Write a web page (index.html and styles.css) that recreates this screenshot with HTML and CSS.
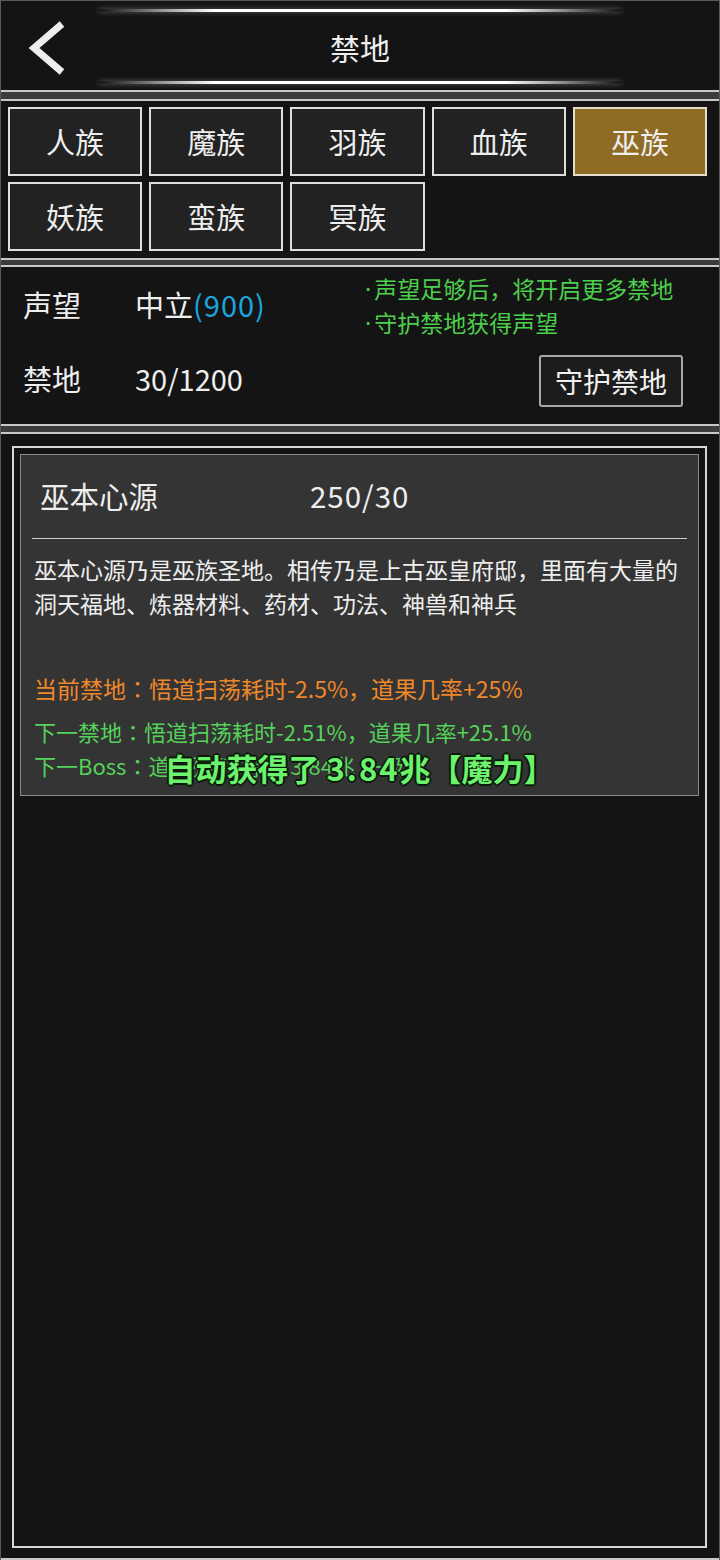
FILE: index.html
```html
<!doctype html>
<html>

<head>
	<meta charset="utf-8">
	<title>禁地</title>
	<link rel="stylesheet" href="styles.css">
</head>

<body>
	<div class="app">
		<!--ヘッダー-->
		<div class="header">
			<div class="deco"></div>
			<div class="title-row">
				<svg class="back" width="44" height="56" viewBox="0 0 44 56">
					<polyline points="36,3 8,27 36,51" fill="none" stroke="#ededed" stroke-width="7" stroke-linejoin="miter" />
				</svg>
				<h1>禁地</h1>
			</div>
			<div class="deco"></div>
		</div>

		<!--種族タブ-->
		<div class="panel tabs">
			<div class="tab">人族</div>
			<div class="tab">魔族</div>
			<div class="tab">羽族</div>
			<div class="tab">血族</div>
			<div class="tab active">巫族</div>
			<div class="tab">妖族</div>
			<div class="tab">蛮族</div>
			<div class="tab">冥族</div>
		</div>

		<!--声望-->
		<div class="panel stats">
			<div class="stat-left">
				<div class="stat-row"><span class="label">声望</span><span>中立<span class="blue">(900)</span></span></div>
				<div class="stat-row"><span class="label">禁地</span><span>30/1200</span></div>
			</div>
			<div class="stat-right">
				<p class="note"><span class="dot">·</span>声望足够后，将开启更多禁地</p>
				<p class="note"><span class="dot">·</span>守护禁地获得声望</p>
				<button class="guard-btn">守护禁地</button>
			</div>
		</div>

		<!--禁地リスト-->
		<div class="panel main">
			<div class="frame">
				<div class="card">
					<div class="card-head">
						<span class="card-name">巫本心源</span>
						<span class="num">250/30</span>
					</div>
					<p class="desc">巫本心源乃是巫族圣地。相传乃是上古巫皇府邸，里面有大量的洞天福地、炼器材料、药材、功法、神兽和神兵</p>
					<p class="cur">当前禁地：悟道扫荡耗时-2.5%，道果几率+25%</p>
					<p class="next">下一禁地：悟道扫荡耗时-2.51%，道果几率+25.1%</p>
					<p class="next boss">下一Boss：道祖残魂 等级 3.84兆 一级</p>
					<div class="toast">自动获得了 <span class="toast-num">3.84</span>兆【魔力】</div>
				</div>
			</div>
		</div>
	</div>
</body>

</html>
```

FILE: styles.css
```css
body {
	margin: 0;
	background-color: #151515;
	font-family: "Noto Sans CJK SC", "Noto Sans", sans-serif;
	color: #eeeeee;
}

.app {
	width: 720px;
	height: 1560px;
	box-sizing: border-box;
	border: 1px solid #5a5a5a;
	border-bottom: none;
	background-color: #3b3b3b;
	display: flex;
	flex-direction: column;
}

.header {
	height: 91px;
	background-color: #141414;
	border-bottom: 2px solid #c8c8c8;
	display: flex;
	flex-direction: column;
	justify-content: space-between;
	padding: 8px 0 6px;
	box-sizing: border-box;
	margin-bottom: 7px;
}

.deco {
	height: 3px;
	margin: 0 98px;
	background: linear-gradient(to right, rgba(255, 255, 255, 0), #ffffff 22%, #ffffff 78%, rgba(255, 255, 255, 0));
	box-shadow: 0 0 5px rgba(255, 255, 255, 0.35);
}

.title-row {
	position: relative;
	text-align: center;
}

.title-row h1 {
	margin: 0;
	font-size: 30px;
	font-weight: normal;
	line-height: 42px;
}

.back {
	position: absolute;
	left: 25px;
	top: -5px;
}

.panel {
	background-color: #141414;
	border-top: 2px solid #c8c8c8;
	border-bottom: 2px solid #c8c8c8;
}

.tabs {
	display: grid;
	grid-template-columns: repeat(5, 1fr);
	column-gap: 7px;
	row-gap: 6px;
	padding: 6px 12px 7px 7px;
	margin-bottom: 5px;
}

.tab {
	height: 69px;
	box-sizing: border-box;
	border: 2px solid #dedede;
	background-color: #222222;
	font-size: 29px;
	line-height: 64px;
	text-align: center;
}

.tab.active {
	background-color: #8f6b24;
	border-color: #e6dccb;
}

.stats {
	height: 161px;
	box-sizing: border-box;
	display: flex;
	margin-bottom: 6px;
}

.stat-left {
	padding: 17px 0 0 22px;
	display: flex;
	flex-direction: column;
	gap: 34px;
}

.stat-row {
	font-size: 29px;
	line-height: 40px;
}

.label {
	display: inline-block;
	width: 112px;
}

.blue {
	color: #1ba6de;
	letter-spacing: 1px;
}

.stat-right {
	margin-left: auto;
	margin-right: 36px;
	width: 318px;
	padding-top: 5px;
	display: flex;
	flex-direction: column;
	align-items: flex-start;
}

.note {
	margin: 0;
	font-size: 23px;
	line-height: 33px;
	color: #4ccf4c;
	white-space: nowrap;
}

.dot {
	font-family: "Noto Sans", sans-serif;
	margin-right: 3px;
}

.guard-btn {
	align-self: flex-end;
	margin-top: 15px;
	width: 144px;
	height: 52px;
	border: 2px solid #a8a8a8;
	border-radius: 3px;
	background-color: #1c1c1c;
	color: #f0f0f0;
	font-family: inherit;
	font-size: 28px;
	padding: 0;
}

.main {
	flex: 1;
	padding: 12px 12px 10px 11px;
}

.frame {
	height: 100%;
	box-sizing: border-box;
	border: 2px solid #d8d8d8;
	padding: 6px 6px 0 6px;
}

.card {
	position: relative;
	background-color: #343434;
	border: 1px solid #8a8a8a;
	padding: 0 0 13px 0;
}

.card-head {
	display: flex;
	padding: 20px 19px 0;
	font-size: 29.5px;
	line-height: 40px;
	border-bottom: 1px solid #cfcfcf;
	margin: 0 11px;
	padding-bottom: 23px;
	padding-left: 8px;
}

.card-name {
	width: 270px;
}

.num {
	letter-spacing: 1px;
}

.desc {
	margin: 13px 13px 0;
	font-size: 23px;
	line-height: 34px;
	height: 119px;
}

.cur,
.next {
	margin: 0 13px;
	line-height: 34px;
	font-family: "Noto Sans CJK JP", sans-serif;
}

.cur {
	font-size: 23px;
	color: #ee882a;
	margin-bottom: 9px;
}

.next {
	font-size: 22px;
	color: #55d25a;
}

.toast {
	position: absolute;
	left: 0;
	right: 0;
	top: 292px;
	text-align: center;
	font-size: 31px;
	font-weight: bold;
	line-height: 42px;
	color: #6cf26c;
	text-shadow: -2px 0 #0a1a0a, 2px 0 #0a1a0a, 0 -2px #0a1a0a, 0 2px #0a1a0a, -1px -1px #0a1a0a, 1px 1px #0a1a0a, -1px 1px #0a1a0a, 1px -1px #0a1a0a;
}

.toast-num {
	letter-spacing: 2px;
}
```
